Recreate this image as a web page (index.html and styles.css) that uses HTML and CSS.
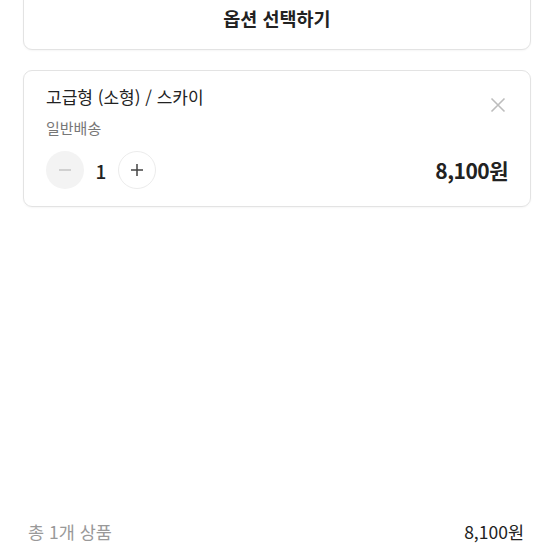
FILE: index.html
```html
<!DOCTYPE html>
<html lang="ko">
<head>
<meta charset="utf-8">
<link rel="stylesheet" href="styles.css">
</head>
<body>
<div class="page">
  <button class="option-btn">옵션 선택하기</button>
  <div class="item-card">
    <div class="item-head">
      <div class="item-title">고급형 (소형) / 스카이</div>
      <svg class="close" width="16" height="16" viewBox="0 0 16 16"><path d="M1.5 1.5 L14.5 14.5 M14.5 1.5 L1.5 14.5" stroke="#bdbdbd" stroke-width="1.6" fill="none"/></svg>
    </div>
    <div class="item-ship">일반배송</div>
    <div class="item-row">
      <div class="stepper">
        <span class="step minus"><svg width="14" height="14" viewBox="0 0 14 14"><path d="M1 7 H13" stroke="#c4c4c4" stroke-width="1.5"/></svg></span>
        <span class="qty">1</span>
        <span class="step plus"><svg width="14" height="14" viewBox="0 0 14 14"><path d="M1 7 H13 M7 1 V13" stroke="#444" stroke-width="1.5"/></svg></span>
      </div>
      <div class="item-price">8,100원</div>
    </div>
  </div>
  <div class="spacer"></div>
  <div class="total">
    <span class="total-label">총 1개 상품</span>
    <span class="total-price">8,100원</span>
  </div>
</div>
</body>
</html>
```
FILE: styles.css
```css
* { box-sizing: border-box; }
html, body { margin: 0; padding: 0; background: #fff; }
body {
  font-family: "Noto Sans CJK KR", "Noto Sans", sans-serif;
  color: #222;
  overflow: hidden;
  height: 555px;
}
.page {
  display: flex;
  flex-direction: column;
  height: 555px;
  padding: 0 24px 0 23px;
}
.option-btn {
  margin-top: -14px;
  height: 64px;
  width: 100%;
  border: 1px solid #e3e3e3;
  border-radius: 9px;
  background: #fff;
  font-family: inherit;
  font-size: 18.5px;
  font-weight: 700;
  color: #222;
  box-shadow: 0 1px 2px rgba(0,0,0,0.04);
  padding: 0;
}
.item-card {
  margin-top: 20px;
  height: 137px;
  border: 1px solid #e3e3e3;
  border-radius: 9px;
  padding: 14px 22px 0 22px;
  box-shadow: 0 1px 2px rgba(0,0,0,0.04);
}
.item-head {
  display: flex;
  justify-content: space-between;
  align-items: flex-start;
}
.item-title {
  font-size: 17px;
  line-height: 24px;
  color: #222;
}
.close { margin-top: 12px; margin-right: 2px; }
.item-ship {
  margin-top: 5px;
  font-size: 15px;
  line-height: 20px;
  color: #777;
}
.item-row {
  margin-top: 12px;
  display: flex;
  justify-content: space-between;
  align-items: center;
  height: 40px;
}
.stepper {
  display: flex;
  align-items: center;
}
.step {
  width: 38px;
  height: 38px;
  border-radius: 50%;
  display: flex;
  align-items: center;
  justify-content: center;
}
.minus { background: #f3f3f3; }
.plus { background: #fff; border: 1px solid #ececec; }
.qty {
  width: 34px;
  text-align: center;
  font-size: 19px;
  font-weight: 500;
  color: #222;
}
.item-price {
  font-size: 21px;
  font-weight: 700;
  letter-spacing: -0.5px;
}
.spacer { flex: 1; }
.total {
  display: flex;
  justify-content: space-between;
  align-items: center;
  height: 30px;
  margin-bottom: 9px;
  padding: 0 7px 0 5px;
}
.total-label { font-size: 17.5px; color: #999; }
.total-price { font-size: 17.5px; color: #222; }
```
